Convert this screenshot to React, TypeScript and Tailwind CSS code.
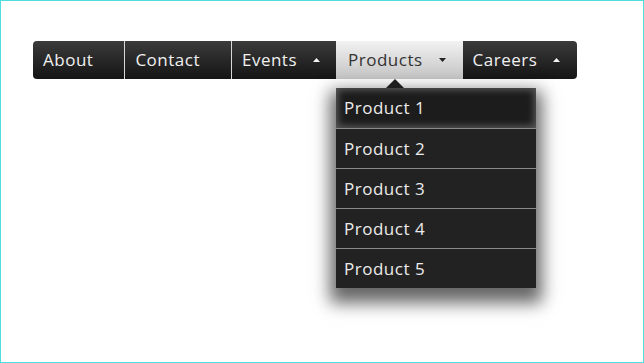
import React from 'react';

const font = { fontFamily: '"Open Sans", "Noto Sans", Arial, sans-serif' };

const Caret: React.FC<{ up?: boolean; dark?: boolean }> = ({ up, dark }) => (
    <svg width="7" height="4" viewBox="0 0 7 4" className="block">
        <polygon points={up ? '0,4 7,4 3.5,0' : '0,0 7,0 3.5,4'} fill={dark ? '#222' : '#f2f2f2'} />
    </svg>
);

const navItems = [
    { label: 'About', caret: null },
    { label: 'Contact', caret: null },
    { label: 'Events', caret: 'up' },
    { label: 'Products', caret: 'down', active: true },
    { label: 'Careers', caret: 'up' },
];

const products = ['Product 1', 'Product 2', 'Product 3', 'Product 4', 'Product 5'];

export default function App() {
    return (
        <div className="w-[644px] h-[363px] border border-[#4fdede] bg-white" style={font}>
            <div className="pt-[40px] pl-[32px]">
                <ul className="flex h-[38px] w-max rounded-[4px] bg-gradient-to-b from-[#3b3b3b] to-[#151515]">
                    {navItems.map((item, i) => (
                        <li
                            key={item.label}
                            className={`relative flex items-center text-[17px] tracking-[0.5px]
                ${i > 0 && !item.active && !navItems[i - 1].active ? 'border-l border-[#d8d8d8]' : ''}
                ${item.active ? 'pl-[12px]' : 'pl-[10px]'}
                ${i === 0 ? 'rounded-l-[4px]' : ''} ${i === navItems.length - 1 ? 'rounded-r-[4px]' : ''}
                ${item.active ? 'bg-gradient-to-b from-[#f2f2f2] to-[#c4c4c4] text-[#333]' : 'text-[#f0f0f0]'}`}
                        >
                            <span>{item.label}</span>
                            {item.caret ? (
                                <span className={`pl-[16px] flex items-center ${i > 2 ? 'pr-[17px]' : 'pr-[16px]'}`}>
                                    <Caret up={item.caret === 'up'} dark={item.active} />
                                </span>
                            ) : (
                                <span className="w-[31px]" />
                            )}

                            {/* Dropdown */}
                            {item.active && (
                                <div className="absolute left-0 top-[38px] pt-[9px] z-10">
                                    <div className="absolute top-[0px] left-[50px] w-0 h-0 border-x-[9px] border-x-transparent border-b-[9px] border-b-[#1e1e1e]" />
                                    <ul className="w-[200px] bg-[#222] shadow-[0_9px_16px_6px_rgba(0,0,0,0.6)]">
                                        {products.map((p, j) => (
                                            <li
                                                key={p}
                                                className={`h-[40px] flex items-center pl-[8px] text-[17px] tracking-[0.5px] text-[#ececec]
                        ${j > 0 ? 'border-t border-[#8a8a8a]' : ''}
                        ${j === 0 ? 'bg-[#1c1c1c] shadow-[inset_0_0_7px_2px_rgba(255,255,255,0.28)]' : ''}`}
                                            >
                                                {p}
                                            </li>
                                        ))}
                                    </ul>
                                </div>
                            )}
                        </li>
                    ))}
                </ul>
            </div>
        </div>
    );
}
